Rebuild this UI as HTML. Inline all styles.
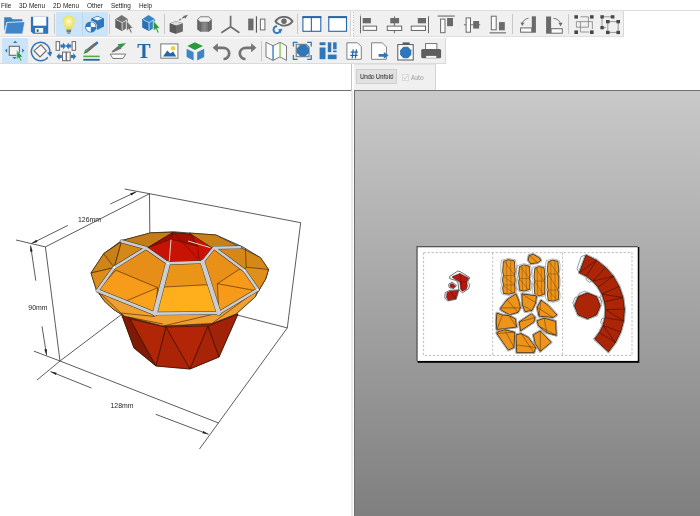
<!DOCTYPE html>
<html><head><meta charset="utf-8">
<style>
html,body{margin:0;padding:0;}
body{width:700px;height:516px;overflow:hidden;position:relative;background:#fff;font-family:"Liberation Sans",sans-serif;}
.a{position:absolute;will-change:transform;}
#menu{left:0;top:0;width:700px;height:10px;background:#fff;}
#menu span{position:absolute;top:1.5px;font-size:6.4px;line-height:8px;color:#1a1a1a;will-change:transform;}
#mline{left:0;top:10px;width:700px;height:1px;background:#dcdcdc;}
#tb1{left:0;top:11px;width:624px;height:26px;background:#f0f0f0;border-right:1px solid #d8d8d8;border-bottom:1px solid #dfdfdf;box-sizing:border-box;}
#tb2{left:0;top:38px;width:446px;height:26px;background:#f0f0f0;border-right:1px solid #d8d8d8;border-bottom:1px solid #dadada;box-sizing:border-box;}
.hl{position:absolute;background:#cce4f7;}
.sep{position:absolute;width:1px;background:#c8c8c8;}
#panel{left:354px;top:64px;width:82px;height:26px;background:#f0f0f0;border-right:1px solid #d4d4d4;border-top:1px solid #e2e2e2;box-sizing:border-box;}
#btn{left:356px;top:69px;width:41px;height:15px;background:#e1e1e1;border:1px solid #cfcfcf;box-sizing:border-box;}
#btn span{position:absolute;left:2.5px;top:2px;font-size:7px;line-height:10px;color:#111;will-change:transform;white-space:nowrap;transform:scaleX(0.85);transform-origin:0 0;}
#chk{left:402px;top:73.5px;width:7px;height:7px;border:1px solid #dadada;box-sizing:border-box;background:#f3f3f3;}
#auto{left:410.5px;top:74px;font-size:6.6px;line-height:8px;color:#9a9a9a;transform:scaleX(0.9);transform-origin:0 0;}
#hl90{left:0;top:90px;width:351px;height:1px;background:#707070;}
#vl351{left:351px;top:64px;width:1px;height:27px;background:#c4c4c4;}
#vl354{left:354px;top:64px;width:1px;height:26px;background:#dedede;}
#view2d{left:354px;top:90px;width:346px;height:426px;border-left:1px solid #6e6e6e;border-top:1px solid #6e6e6e;box-sizing:border-box;background:linear-gradient(#c9c9c9,#7f7f7f);}
</style></head><body>
<div id="menu" class="a">
<span style="left:1px">File</span>
<span style="left:19px">3D Menu</span>
<span style="left:53px">2D Menu</span>
<span style="left:87px">Other</span>
<span style="left:111px">Setting</span>
<span style="left:139px">Help</span>
</div>
<div id="mline" class="a"></div>
<div id="tb1" class="a">
<div class="hl" style="left:56px;top:1px;width:26px;height:24px"></div>
<div class="hl" style="left:82px;top:1px;width:26px;height:24px"></div>
<div style="position:absolute;left:82px;top:1px;width:1px;height:24px;background:#b9d7f0"></div>
<div class="sep" style="left:54px;top:3px;height:20px"></div>
<div class="sep" style="left:109px;top:3px;height:20px"></div>
<div class="sep" style="left:164px;top:3px;height:20px"></div>
<div class="sep" style="left:297px;top:3px;height:20px"></div>
<div class="sep" style="left:360px;top:3px;height:20px"></div>
<div style="position:absolute;left:350px;top:0;width:1px;height:26px;background:#d6d6d6"></div>
<div style="position:absolute;left:351px;top:0;width:2px;height:26px;background:#f7f7f7"></div>
<div style="position:absolute;left:353px;top:1px;width:1px;height:24px;background:repeating-linear-gradient(#c2c2c2 0 1px,transparent 1px 2.6px)"></div>
<div class="sep" style="left:512px;top:3px;height:20px"></div>
<div class="sep" style="left:568px;top:3px;height:20px"></div>
</div>
<div id="tb2" class="a">
<div class="hl" style="left:2px;top:0px;width:26px;height:25px"></div>
<div class="sep" style="left:261px;top:3px;height:20px"></div>
</div>
<!--ICONS-->
<svg class="a" style="left:0;top:0" width="700" height="66" viewBox="0 0 700 66">
<!-- folder -->
<path fill="#3a7fc2" d="M4.2,17.2 H10.8 L12.7,19.2 H22.4 V21.5 L6.5,22.2 L4.2,31.5 Z"/>
<path fill="#3e86c9" stroke="#e9f1f8" stroke-width="0.7" d="M6.9,22.4 L24.8,21.7 L22.6,33.9 L4.8,33.9 Z"/>
<!-- save -->
<path fill="#2f73b4" d="M30.9,16.8 H48.2 V33.8 H33.2 L30.9,31.4 Z"/>
<rect x="33.1" y="16.8" width="13.2" height="8.9" fill="#fafcff"/>
<rect x="35.1" y="28" width="8.1" height="4.7" fill="#f5f8fb"/>
<rect x="36.7" y="29.4" width="1.9" height="2.4" fill="#2f4f6f"/>
<!-- bulb -->
<defs>
<radialGradient id="glow" cx="0.5" cy="0.45" r="0.6"><stop offset="0" stop-color="#fffdf0"/><stop offset="0.4" stop-color="#f5ee8c"/><stop offset="1" stop-color="#e6dc50"/></radialGradient><filter id="soft" x="-20%" y="-20%" width="140%" height="140%"><feGaussianBlur stdDeviation="0.45"/></filter>
<linearGradient id="gcyl" x1="0" x2="1"><stop offset="0" stop-color="#5c5c5c"/><stop offset="0.5" stop-color="#8a8a8a"/><stop offset="1" stop-color="#5c5c5c"/></linearGradient>
</defs>
<path fill="url(#glow)" filter="url(#soft)" d="M68.8,15.6 C72.4,15.6 75,18.3 75,21.6 C75,24.1 73.4,25.6 72.3,27.5 L71.7,29 H65.9 L65.3,27.5 C64.2,25.6 62.6,24.1 62.6,21.6 C62.6,18.3 65.2,15.6 68.8,15.6 Z"/>
<rect x="66.4" y="29.6" width="4.8" height="1.1" fill="#5a5a5a"/>
<rect x="66.6" y="31.2" width="4.4" height="1.1" fill="#5a5a5a"/>
<rect x="67.4" y="32.7" width="2.8" height="0.9" fill="#6a6a6a"/>
<!-- 3d -->
<path fill="#2f77b8" d="M91.2,18.6 L97.6,15.8 L104,18.6 V26.6 L97.6,29.8 L91.2,26.6 Z"/>
<path fill="#eef4fa" d="M92.8,18.6 L97.6,16.6 L102.4,18.6 L97.6,20.6 Z"/>
<circle cx="90.8" cy="27" r="6.2" fill="#cce4f7"/>
<circle cx="90.8" cy="27" r="5.6" fill="#2f77b8"/>
<path fill="#f4f8fc" d="M90.8,27 V22.2 A4.8,4.8 0 0 1 95.6,27 Z M90.8,27 V31.8 A4.8,4.8 0 0 1 86,27 Z"/>
<!-- cube cursor gray -->
<path fill="#737373" d="M121.7,15.1 L127.9,18.9 V27.6 L122.1,30.9 L115.5,27.6 V18.9 Z"/>
<path fill="#5f5f5f" d="M115.5,18.9 L122.1,22.6 V30.9 L115.5,27.6 Z"/>
<path fill="none" stroke="#f0f0f0" stroke-width="0.8" d="M116.2,19.6 L122.1,22.6 L127.4,19.6 M122.1,22.6 V30.4"/>
<path fill="#6e6e6e" stroke="#f0f0f0" stroke-width="0.8" d="M126.4,20.6 V31.2 L128.7,29 L130.7,33.3 L132.3,32.5 L130.4,28.3 H133.4 Z"/>
<!-- cube cursor blue -->
<path fill="#3584c6" d="M148.6,15.1 L154.8,18.9 V27.6 L149,30.9 L142.4,27.6 V18.9 Z"/>
<path fill="#2a6fb0" d="M142.4,18.9 L149,22.6 V30.9 L142.4,27.6 Z"/>
<path fill="none" stroke="#d9ecf8" stroke-width="0.8" d="M143.1,19.6 L149,22.6 L154.3,19.6 M149,22.6 V30.4"/>
<path fill="#2a9a3c" stroke="#f0f0f0" stroke-width="0.8" d="M153.3,20.6 V31.2 L155.6,29 L157.6,33.3 L159.2,32.5 L157.3,28.3 H160.3 Z"/>
<!-- cube arrow -->
<path fill="#6a6a6a" d="M176,21 L182.9,23.3 V31.4 L176,33.8 L169.8,31.8 V23.3 Z"/>
<path fill="#dedede" d="M176,21.3 L182.4,23.4 L176,25.6 L170.3,23.4 Z"/>
<path fill="#5a5a5a" d="M169.8,23.5 L176,25.7 V33.8 L169.8,31.8 Z"/>
<path fill="none" stroke="#6a6a6a" stroke-width="1.2" d="M179.2,20.2 L181,19 M182.2,18.2 L184.2,16.9"/>
<path fill="#6a6a6a" d="M188,14.8 L183.2,16 L185.2,18.8 Z"/>
<!-- hex prism -->
<path fill="url(#gcyl)" d="M197.2,19.5 L200.3,16.4 H208.8 L211.8,19.5 V29.5 L208.8,31.8 H200.3 L197.2,29.5 Z"/>
<path fill="#f2f2f2" stroke="#707070" stroke-width="0.6" d="M197.6,19.5 L200.4,16.9 H208.7 L211.4,19.5 L208.7,22 H200.4 Z"/>
<path fill="none" stroke="#505050" stroke-width="0.4" d="M200.4,22 V31.6 M208.7,22 V31.6"/>
<!-- axes -->
<path fill="none" stroke="#6c6c6c" stroke-width="1.7" d="M230.6,15.7 V26.8 L221.3,32.7 M230.6,26.8 L239.4,32.7"/>
<!-- bars -->
<rect x="248.2" y="18.6" width="5.3" height="11.7" fill="#6a6a6a"/>
<rect x="255.9" y="16.3" width="1.1" height="16.4" fill="#5a5a5a"/>
<rect x="260.4" y="19.1" width="4.5" height="10.8" fill="#fafafa" stroke="#6a6a6a" stroke-width="1"/>
<!-- eye -->
<path fill="#6a6a6a" d="M274.3,21.3 C277,17 280.5,16 284,16 C287.5,16 291,17 293.6,21.3 C291,25.6 287.5,26.5 284,26.5 C280.5,26.5 277,25.6 274.3,21.3 Z"/>
<path fill="#f0f0f0" d="M276.8,21.3 C279,18.5 281.5,17.8 284,17.8 C286.5,17.8 289,18.5 291.2,21.3 C289,24 286.5,24.8 284,24.8 C281.5,24.8 279,24 276.8,21.3 Z"/>
<circle cx="284" cy="21.2" r="2.7" fill="#6a6a6a"/>
<circle cx="277" cy="29.6" r="5.2" fill="#f0f0f0"/>
<path fill="none" stroke="#2f77b8" stroke-width="1.9" d="M280.3,29.8 A3.4,3.4 0 1 1 277,26.3"/>
<path fill="#2f77b8" d="M280.5,33.5 L282.4,28.8 L278.4,29.2 Z"/>
<!-- two-pane window -->
<rect x="302.9" y="16.8" width="17.9" height="14.5" fill="#fff" stroke="#2566a6" stroke-width="1.1"/>
<rect x="302.4" y="16.3" width="18.9" height="1.8" fill="#2566a6"/>
<rect x="310.8" y="16.8" width="1.1" height="14.5" fill="#2566a6"/>
<!-- single window -->
<rect x="328.8" y="16.8" width="17.7" height="14.5" fill="#fff" stroke="#2566a6" stroke-width="1.1"/>
<rect x="328.2" y="16.3" width="18.8" height="1.8" fill="#2566a6"/>
<!-- align left -->
<rect x="360" y="16.3" width="1" height="16.6" fill="#6a6a6a"/>
<rect x="362.7" y="18" width="8.2" height="5.3" fill="#6a6a6a"/>
<rect x="363.2" y="26.1" width="13.4" height="4.3" fill="#fbfbfb" stroke="#6a6a6a" stroke-width="1"/>
<!-- align center -->
<rect x="393.9" y="16.3" width="1" height="16.9" fill="#6a6a6a"/>
<rect x="390.3" y="18" width="8.8" height="5.3" fill="#6a6a6a"/>
<rect x="387.3" y="26.1" width="14.4" height="4.4" fill="#fbfbfb" stroke="#6a6a6a" stroke-width="1"/>
<!-- align right -->
<rect x="428" y="16.3" width="1" height="16.9" fill="#6a6a6a"/>
<rect x="417.8" y="18" width="8.2" height="5.3" fill="#6a6a6a"/>
<rect x="411.3" y="26.1" width="14.2" height="4.4" fill="#fbfbfb" stroke="#6a6a6a" stroke-width="1"/>
<!-- align top -->
<rect x="437.7" y="15.5" width="17" height="1.1" fill="#6a6a6a"/>
<rect x="440.6" y="19.1" width="4.4" height="13.6" fill="#fbfbfb" stroke="#6a6a6a" stroke-width="1"/>
<rect x="447.1" y="18" width="5.9" height="8.2" fill="#6a6a6a"/>
<!-- align middle -->
<rect x="463.9" y="24.3" width="16.3" height="1" fill="#6a6a6a"/>
<rect x="466.1" y="17.9" width="4.4" height="14.3" fill="#fbfbfb" stroke="#6a6a6a" stroke-width="1"/>
<rect x="473.2" y="21" width="5.9" height="7.6" fill="#6a6a6a"/>
<!-- align bottom -->
<rect x="489.6" y="32.3" width="16.4" height="1.1" fill="#6a6a6a"/>
<rect x="491.3" y="16.2" width="4.9" height="13.6" fill="#fbfbfb" stroke="#6a6a6a" stroke-width="1"/>
<rect x="499" y="22.1" width="5.8" height="8.2" fill="#6a6a6a"/>
<!-- rotate left -->
<rect x="531.8" y="16.3" width="4.1" height="16.4" fill="#6a6a6a"/>
<rect x="520.6" y="27.9" width="11.2" height="4.3" fill="#fbfbfb" stroke="#6a6a6a" stroke-width="1"/>
<path fill="none" stroke="#6a6a6a" stroke-width="0.9" d="M528.6,18.2 C525,18.6 522.8,21 522.3,23.8"/>
<path fill="#6a6a6a" d="M520.4,22.6 L522.3,26 L524.4,22.8 Z"/>
<!-- rotate right -->
<rect x="546.1" y="16.5" width="5" height="17.2" fill="#6a6a6a"/>
<rect x="551.1" y="28.7" width="11.2" height="4.5" fill="#fbfbfb" stroke="#6a6a6a" stroke-width="1"/>
<path fill="none" stroke="#6a6a6a" stroke-width="0.9" d="M553.5,18.3 C557.5,18.6 560,21 560.6,24"/>
<path fill="#6a6a6a" d="M558.5,23 L560.6,26.2 L562.6,22.8 Z"/>
<!-- group -->
<path fill="none" stroke="#7a7a7a" stroke-width="0.75" d="M580.4,16.8 H588.4 V27.2 H576.4 V21.6 H592.4 V29 M580.4,21.6 V32 H589.2"/>
<g fill="#474747">
<rect x="574.4" y="15.2" width="3.6" height="3.4"/><rect x="590" y="15.2" width="3.6" height="3.4"/>
<rect x="574.4" y="30.4" width="3.6" height="3.6"/><rect x="590" y="30.4" width="3.6" height="3.6"/>
</g>
<!-- ungroup -->
<path fill="none" stroke="#7a7a7a" stroke-width="0.75" d="M602,16.8 H612.6 M602,16.8 V27.6 H606 M607.8,21.6 H618.2 V32.4 H607.8 Z"/>
<g fill="#474747">
<rect x="600.4" y="15.2" width="3.4" height="3.3"/><rect x="610.8" y="15.2" width="3.6" height="3.3"/>
<rect x="600.4" y="26" width="3.4" height="3.3"/>
<rect x="606" y="20" width="3.6" height="3.3"/><rect x="616.4" y="20" width="3.6" height="3.3"/>
<rect x="606" y="30.8" width="3.6" height="3.3"/><rect x="616.4" y="30.8" width="3.6" height="3.3"/>
</g>

<!-- ROW 2 -->
<!-- select -->
<rect x="9.3" y="46.3" width="10.1" height="9" fill="#f5f5f5" stroke="#6a6a6a" stroke-width="1.1"/>
<g fill="#2f77b8">
<path d="M15.2,40.8 L17.3,43 H13.1 Z"/><path d="M5,50.6 L7.2,48.4 V52.8 Z"/>
<path d="M24.3,50.6 L22.1,48.4 V52.8 Z"/><path d="M14.5,59.2 L16.6,57 H12.4 Z"/>
</g>
<path fill="#2a9a3c" stroke="#cce4f7" stroke-width="0.7" d="M16.8,50.2 V59.6 L18.8,57.7 L20.6,61.3 L22,60.6 L20.3,57.1 H23 Z"/>
<!-- rotate -->
<path fill="none" stroke="#2f77b8" stroke-width="1.5" d="M49.6,53.5 A9.2,9.2 0 1 0 47.8,57.3"/>
<path fill="#2f77b8" d="M47,52.5 L50.4,56.8 L52.3,51.8 Z"/>
<path fill="#f8f8f8" stroke="#6a6a6a" stroke-width="1.1" d="M41,44.8 L46.3,50.7 L40,57 L34,50.7 Z"/>
<!-- spread -->
<rect x="56.1" y="41.6" width="3.5" height="8.7" fill="#fafafa" stroke="#6a6a6a" stroke-width="1"/>
<rect x="72.1" y="41.6" width="3.5" height="8.7" fill="#fafafa" stroke="#6a6a6a" stroke-width="1"/>
<rect x="62.5" y="52.1" width="3.6" height="8.6" fill="#fafafa" stroke="#6a6a6a" stroke-width="1"/>
<rect x="66.6" y="52.1" width="3.6" height="8.6" fill="#fafafa" stroke="#6a6a6a" stroke-width="1"/>
<g fill="#2f77b8">
<path d="M60.5,44.4 H63 V42.4 L66,45.9 L63,49.4 V47.4 H60.5 Z"/>
<path d="M71.3,44.4 H68.8 V42.4 L65.8,45.9 L68.8,49.4 V47.4 H71.3 Z"/>
<path d="M61.8,54.9 H59.5 V52.9 L56.5,56.4 L59.5,59.9 V57.9 H61.8 Z"/>
<path d="M70.9,54.9 H73.2 V52.9 L76.2,56.4 L73.2,59.9 V57.9 H70.9 Z"/>
</g>
<!-- pen -->
<path fill="none" stroke="#6e6e6e" stroke-width="3" d="M86.8,51 L95.6,43.9"/>
<path fill="#2a9a3c" d="M83.6,53.9 L85.3,49.3 L88.2,52.2 Z"/>
<path fill="none" stroke="#2f77b8" stroke-width="2.6" stroke-linecap="round" d="M95.8,43.8 L97,42.9"/>
<rect x="83.3" y="55.6" width="16.4" height="1.6" fill="#5aa84a"/>
<rect x="83.3" y="58.9" width="16.4" height="1.8" fill="#2566a6"/>
<!-- knife -->
<path fill="#2a9a3c" d="M117.5,44.3 L126.1,42.9 L120.8,48.3 Z"/>
<path fill="#6e6e6e" d="M118.6,45.6 L121.6,48.6 L112.6,52.6 L111.6,51.6 Z"/>
<path fill="#ffffff" stroke="#777" stroke-width="1" d="M110.2,54.1 H125.8 L123,58.5 H112.9 Z"/>
<!-- T -->
<text x="143.9" y="58.2" text-anchor="middle" font-family="Liberation Serif" font-weight="bold" font-size="20" fill="#2566a6">T</text>
<!-- image -->
<rect x="160.8" y="43.9" width="17.1" height="14.3" fill="#fff" stroke="#777" stroke-width="1"/>
<circle cx="173.1" cy="48.2" r="2.3" fill="#e5d443"/>
<path fill="#2566a6" d="M163,56.4 L167.3,50.5 L170.2,53.5 L173.1,51.5 L176.2,56.4 Z"/>
<!-- colored cube -->
<path fill="#2a9a3c" d="M194.8,42.3 L203,45.9 L194.8,49.9 L187.4,45.9 Z"/>
<path fill="#3a86c6" d="M186.6,48.7 L193.6,52.2 V60.4 L186.6,56.9 Z"/>
<path fill="#3a86c6" d="M197.2,52.2 L204.2,48.7 V56.9 L197.2,60.4 Z"/>
<!-- undo -->
<path fill="none" stroke="#737373" stroke-width="2.7" d="M216.5,47.8 H223 C226.5,47.8 229.2,50.3 229.2,53.5 C229.2,56.7 226.5,59 223.5,59"/>
<path fill="#737373" d="M212.6,47.8 L217.8,43.3 V52.3 Z"/>
<!-- redo -->
<path fill="none" stroke="#737373" stroke-width="2.7" d="M252.4,47.8 H246 C242.5,47.8 239.8,50.3 239.8,53.5 C239.8,56.7 242.5,59 245.5,59"/>
<path fill="#737373" d="M256.4,47.8 L251.2,43.3 V52.3 Z"/>
<!-- map -->
<path fill="#fafafa" stroke="#6e6e6e" stroke-width="0.9" d="M266,42.3 L273,45.8 L280,42.3 L286.5,45.8 V60.4 L280,56.9 L273,60.4 L266,56.9 Z"/>
<rect x="272.4" y="45.8" width="1.3" height="14.4" fill="#2f77b8"/>
<rect x="279.4" y="42.6" width="1.3" height="14.2" fill="#7cc45a"/>
<!-- frame -->
<path fill="none" stroke="#2f77b8" stroke-width="1.3" d="M293.4,46.5 V42.3 H297.6 M307.2,42.3 H311.2 V46.5 M311.2,55 V59.3 H307.2 M297.6,59.3 H293.4 V55"/>
<path fill="#fff" stroke="#888" stroke-width="1.4" d="M296.3,44.5 H306.3 L309,47.2 V56.5 H296.3 Z"/>
<path fill="#2f77b8" d="M300.5,44.6 H305.3 L309,48.3 V52.9 L305.3,56.5 H300.5 L296.9,52.9 V48.3 Z"/>
<!-- layout -->
<g fill="#2f77b8">
<rect x="319.6" y="42.3" width="5.9" height="2.9"/>
<rect x="319.6" y="47.5" width="5.9" height="11.7"/>
<rect x="327.8" y="42.3" width="3.5" height="9.9"/>
<rect x="333.1" y="42.3" width="3.5" height="7"/>
<rect x="333.1" y="50.5" width="3.5" height="1.7"/>
<rect x="327.8" y="54.6" width="8.8" height="4.6"/>
</g>
<!-- page # -->
<path fill="#fff" stroke="#808080" stroke-width="1" d="M346.9,42.8 H357.5 L361.3,46.6 V59.3 H346.9 Z"/>
<path fill="none" stroke="#2566a6" stroke-width="1.25" d="M353.2,49.4 L352.2,58.2 M356.4,49.4 L355.4,58.2 M350.6,52.2 H358 M350.3,55.3 H357.7"/>
<!-- export -->
<path fill="#fff" stroke="#808080" stroke-width="1" d="M371.6,42.8 H382.3 L386.4,46.9 V59.3 H371.6 Z"/>
<path fill="#2f77b8" d="M378.6,53.9 H383.8 V51.9 L388.6,55.3 L383.8,58.7 V56.7 H378.6 Z"/>
<!-- paste -->
<rect x="397.8" y="44.6" width="15.4" height="15.4" fill="#fff" stroke="#555" stroke-width="1"/>
<rect x="402.6" y="42.4" width="7" height="1.9" fill="#555"/>
<path fill="#2f77b8" d="M403.4,46.8 H408 L411.3,50.2 V54.8 L408,58.2 H403.4 L400.1,54.8 V50.2 Z"/>
<!-- printer -->
<rect x="425.6" y="43.6" width="11.3" height="6" fill="#fff" stroke="#666" stroke-width="0.9"/>
<rect x="421.2" y="49" width="19.9" height="9.3" rx="1.5" fill="#5e5e5e"/>
<rect x="426.1" y="55.9" width="10.2" height="2" fill="#f4f4f4"/>
</svg>

<!--/ICONS-->
<div id="vl351" class="a"></div>
<div id="vl354" class="a"></div>
<div class="a" style="left:351px;top:91px;width:1.5px;height:425px;background:#e9e9e9"></div>
<div id="panel" class="a"></div>
<div id="btn" class="a"><span>Undo Unfold</span></div>
<div id="chk" class="a"><svg width="7" height="7" style="position:absolute;left:-1px;top:-1px"><path d="M1.5,3.6 L2.9,5.1 L5.6,1.6" fill="none" stroke="#b8b8b8" stroke-width="0.8"/></svg></div>
<div id="auto" class="a">Auto</div>
<div id="hl90" class="a"></div>
<div id="view2d" class="a"></div>
<!--2D-->
<svg class="a" style="left:0;top:0" width="700" height="516" viewBox="0 0 700 516">
<rect x="417.5" y="247" width="221.8" height="115.8" fill="#000"/>
<rect x="416.4" y="246" width="221.3" height="114.9" fill="#555"/>
<rect x="417.7" y="247.3" width="220" height="113.6" fill="#fff"/>
<g fill="none" stroke="#a8a8a8" stroke-width="0.8" stroke-dasharray="2.2,1.8"><path d="M423.6,252.6 H632 V355.4 H423.6 Z M492.7,252.6 V355.4 M562.6,252.6 V355.4"/></g>
<g stroke-linejoin="round">
<path fill="#fff" stroke="#333" stroke-width="0.7" d="M449.6,276.5 L457.8,271 L460.5,271.8 L469.8,277.6 L467.6,281.9 L469.8,284.6 L468.5,288.8 L462.5,292.8 L458.8,289.8 L457.9,282 L455.3,280.3 L449.8,278.6 Z"/>
<path fill="#b8170d" stroke="#222" stroke-width="0.5" d="M452.4,276.5 L459.8,273.4 L468.7,278 L466.7,281.9 L467.5,285.8 L466.4,289.3 L462.5,291.2 L460.5,289.3 L459.8,281.9 L456.7,280.3 L452.4,277.6 Z"/>
<path fill="#fff" stroke="#333" stroke-width="0.7" d="M448.6,284.2 L452.2,282.2 L456.5,285.6 L453.8,288.6 L449.2,287.6 Z"/>
<path fill="#b8170d" stroke="#222" stroke-width="0.5" d="M450,284.6 L452.2,283.4 L455.6,285.9 L453.6,287.9 L450.2,287 Z"/>
<path fill="#fff" stroke="#333" stroke-width="0.7" d="M445.2,292.6 L450,290.3 L459,289.8 L456.2,299.3 L447.6,301 L444.8,298 Z"/>
<path fill="#b8170d" stroke="#222" stroke-width="0.5" d="M447,292.8 L450.2,291.2 L458.4,290.4 L455.8,298.7 L448.2,300.2 L446.4,297.6 Z"/>
<path fill="none" stroke="#5a0a04" stroke-width="0.45" d="M459.8,281.9 L466.7,281.9 M459.8,273.4 L462.5,291.2 M450.2,291.2 L455.8,298.7"/>
</g>

<path d="M529.1,255.3 L533.3,254.3 L539.7,258 L540.8,260.6 L537.6,262.8 L530.7,263.8 L528,260.1 Z" fill="#fff" stroke="#8a8a8a" stroke-width="2.5" stroke-linejoin="round"/><path d="M529.1,255.3 L533.3,254.3 L539.7,258 L540.8,260.6 L537.6,262.8 L530.7,263.8 L528,260.1 Z" fill="#fff" stroke="#fff" stroke-width="1.4" stroke-linejoin="round"/><path d="M529.1,255.3 L533.3,254.3 L539.7,258 L540.8,260.6 L537.6,262.8 L530.7,263.8 L528,260.1 Z" fill="#ee9519" stroke="#151008" stroke-width="0.75" stroke-linejoin="round"/>
<path d="M502.4,260.1 L508.1,258.4 L515.3,259.8 L516.4,264.4 L516.4,270.7 L515.4,275.5 L516.4,278.4 L516.4,282.1 L515.4,285.0 L516.4,287.8 L516.4,291.4 L515.4,294.2 L509.1,295.4 L502.4,294.4 L500.8,291.4 L500.8,287.8 L501.8,285.0 L500.8,282.1 L500.8,278.4 L501.8,275.5 L500.8,270.7 L500.8,264.4 L501.8,259.6 Z" fill="#fff" stroke="#777" stroke-width="0.55" stroke-linejoin="round"/><path d="M503.4,261.4 L508.1,259.6 L514.3,260.8 L515.2,271.5 L514.4,275.5 L515.2,278.5 L515.2,281.0 L514.4,285.0 L515.2,288.0 L514.8,292.7 L509.1,294.2 L503.4,293.4 L502.6,288.0 L503.4,285.0 L502.6,281.0 L502.6,278.5 L503.4,275.5 L502.6,271.5 Z" fill="#ee9519" stroke="#151008" stroke-width="0.7" stroke-linejoin="round"/><path d="M506.6,260.1 L507.1,293.7 M510.6,260.6 L511.1,293.4 M503.4,275.5 L514.4,275.5 M503.4,285.0 L514.4,285.0 M503.9,260.6 L513.8,274.5 M503.9,276.5 L513.8,284.0 M503.9,286.0 L513.8,293.2" fill="none" stroke="#6a4010" stroke-width="0.4"/>
<path d="M518.4,265.4 L523.5,263.7 L530.2,265.1 L531.3,269.0 L531.3,274.4 L530.3,278.5 L531.3,282.2 L531.3,287.2 L530.3,291.0 L524.5,292.2 L518.4,291.2 L516.8,287.2 L516.8,282.2 L517.8,278.5 L516.8,274.4 L516.8,269.0 L517.8,264.9 Z" fill="#fff" stroke="#777" stroke-width="0.55" stroke-linejoin="round"/><path d="M519.4,266.7 L523.5,264.9 L529.2,266.1 L530.1,274.5 L529.3,278.5 L530.1,281.5 L529.7,289.5 L524.5,291.0 L519.4,290.2 L518.6,281.5 L519.4,278.5 L518.6,274.5 Z" fill="#ee9519" stroke="#151008" stroke-width="0.7" stroke-linejoin="round"/><path d="M522.0,265.4 L522.5,290.5 M526.0,265.9 L526.5,290.2 M519.4,278.5 L529.3,278.5 M519.9,265.9 L528.7,277.5 M519.9,279.5 L528.7,290.0" fill="none" stroke="#6a4010" stroke-width="0.4"/>
<path d="M533.8,267.0 L538.7,265.3 L545.1,266.7 L546.2,270.9 L546.2,276.6 L545.2,281.0 L546.2,285.4 L546.2,291.4 L545.2,295.8 L539.7,297.0 L533.8,296.0 L532.2,291.4 L532.2,285.4 L533.2,281.0 L532.2,276.6 L532.2,270.9 L533.2,266.5 Z" fill="#fff" stroke="#777" stroke-width="0.55" stroke-linejoin="round"/><path d="M534.8,268.3 L538.7,266.5 L544.1,267.7 L545.0,277.0 L544.2,281.0 L545.0,284.0 L544.6,294.3 L539.7,295.8 L534.8,295.0 L534.0,284.0 L534.8,281.0 L534.0,277.0 Z" fill="#ee9519" stroke="#151008" stroke-width="0.7" stroke-linejoin="round"/><path d="M537.2,267.0 L537.7,295.3 M541.2,267.5 L541.7,295.0 M534.8,281.0 L544.2,281.0 M535.3,267.5 L543.6,280.0 M535.3,282.0 L543.6,294.8" fill="none" stroke="#6a4010" stroke-width="0.4"/>
<path d="M547.1,260.6 L552.2,258.9 L558.9,260.3 L560.0,264.3 L560.0,269.8 L559.0,274.0 L560.0,278.8 L560.0,285.2 L559.0,290.0 L560.0,293.3 L560.0,297.8 L559.0,301.1 L553.2,302.3 L547.1,301.3 L545.5,297.8 L545.5,293.3 L546.5,290.0 L545.5,285.2 L545.5,278.8 L546.5,274.0 L545.5,269.8 L545.5,264.3 L546.5,260.1 Z" fill="#fff" stroke="#777" stroke-width="0.55" stroke-linejoin="round"/><path d="M548.1,261.9 L552.2,260.1 L557.9,261.3 L558.8,270.0 L558.0,274.0 L558.8,277.0 L558.8,286.0 L558.0,290.0 L558.8,293.0 L558.4,299.6 L553.2,301.1 L548.1,300.3 L547.3,293.0 L548.1,290.0 L547.3,286.0 L547.3,277.0 L548.1,274.0 L547.3,270.0 Z" fill="#ee9519" stroke="#151008" stroke-width="0.7" stroke-linejoin="round"/><path d="M550.8,260.6 L551.2,300.6 M554.8,261.1 L555.2,300.3 M548.1,274.0 L558.0,274.0 M548.1,290.0 L558.0,290.0 M548.6,261.1 L557.4,273.0 M548.6,275.0 L557.4,289.0 M548.6,291.0 L557.4,300.1" fill="none" stroke="#6a4010" stroke-width="0.4"/>
<path d="M500.7,307.9 L507.1,299.6 L516,293.8 L518.6,300.2 L520.5,307.9 L517.9,312.4 L509.6,314.9 L500.7,309.8 Z" fill="#fff" stroke="#8a8a8a" stroke-width="2.5" stroke-linejoin="round"/><path d="M500.7,307.9 L507.1,299.6 L516,293.8 L518.6,300.2 L520.5,307.9 L517.9,312.4 L509.6,314.9 L500.7,309.8 Z" fill="#fff" stroke="#fff" stroke-width="1.4" stroke-linejoin="round"/><path d="M500.7,307.9 L507.1,299.6 L516,293.8 L518.6,300.2 L520.5,307.9 L517.9,312.4 L509.6,314.9 L500.7,309.8 Z" fill="#ee9519" stroke="#151008" stroke-width="0.75" stroke-linejoin="round"/>
<path d="M521.8,293.8 L536.5,295.8 L535.8,302.8 L532,310.5 L525,311.7 L522.4,305.3 Z" fill="#fff" stroke="#8a8a8a" stroke-width="2.5" stroke-linejoin="round"/><path d="M521.8,293.8 L536.5,295.8 L535.8,302.8 L532,310.5 L525,311.7 L522.4,305.3 Z" fill="#fff" stroke="#fff" stroke-width="1.4" stroke-linejoin="round"/><path d="M521.8,293.8 L536.5,295.8 L535.8,302.8 L532,310.5 L525,311.7 L522.4,305.3 Z" fill="#ee9519" stroke="#151008" stroke-width="0.75" stroke-linejoin="round"/>
<path d="M541,300.2 L548,305.3 L556.9,314.9 L553.1,317.5 L539,316.2 L537.1,307.3 Z" fill="#fff" stroke="#8a8a8a" stroke-width="2.5" stroke-linejoin="round"/><path d="M541,300.2 L548,305.3 L556.9,314.9 L553.1,317.5 L539,316.2 L537.1,307.3 Z" fill="#fff" stroke="#fff" stroke-width="1.4" stroke-linejoin="round"/><path d="M541,300.2 L548,305.3 L556.9,314.9 L553.1,317.5 L539,316.2 L537.1,307.3 Z" fill="#ee9519" stroke="#151008" stroke-width="0.75" stroke-linejoin="round"/>
<path d="M496.8,313 L502.6,314.9 L509,315.6 L515.4,318.8 L516.7,327.1 L496.8,329.6 L496.2,322 Z" fill="#fff" stroke="#8a8a8a" stroke-width="2.5" stroke-linejoin="round"/><path d="M496.8,313 L502.6,314.9 L509,315.6 L515.4,318.8 L516.7,327.1 L496.8,329.6 L496.2,322 Z" fill="#fff" stroke="#fff" stroke-width="1.4" stroke-linejoin="round"/><path d="M496.8,313 L502.6,314.9 L509,315.6 L515.4,318.8 L516.7,327.1 L496.8,329.6 L496.2,322 Z" fill="#ee9519" stroke="#151008" stroke-width="0.75" stroke-linejoin="round"/>
<path d="M519.2,322 L531.4,313.7 L535.2,317.5 L533.9,322 L520.5,330.9 Z" fill="#fff" stroke="#8a8a8a" stroke-width="2.5" stroke-linejoin="round"/><path d="M519.2,322 L531.4,313.7 L535.2,317.5 L533.9,322 L520.5,330.9 Z" fill="#fff" stroke="#fff" stroke-width="1.4" stroke-linejoin="round"/><path d="M519.2,322 L531.4,313.7 L535.2,317.5 L533.9,322 L520.5,330.9 Z" fill="#ee9519" stroke="#151008" stroke-width="0.75" stroke-linejoin="round"/>
<path d="M537.1,320.7 L544.2,318.1 L555.7,321.3 L556.3,335.4 L546.7,332.8 L538.4,325.8 Z" fill="#fff" stroke="#8a8a8a" stroke-width="2.5" stroke-linejoin="round"/><path d="M537.1,320.7 L544.2,318.1 L555.7,321.3 L556.3,335.4 L546.7,332.8 L538.4,325.8 Z" fill="#fff" stroke="#fff" stroke-width="1.4" stroke-linejoin="round"/><path d="M537.1,320.7 L544.2,318.1 L555.7,321.3 L556.3,335.4 L546.7,332.8 L538.4,325.8 Z" fill="#ee9519" stroke="#151008" stroke-width="0.75" stroke-linejoin="round"/>
<path d="M496.8,332.2 L504.5,329.6 L514.7,332.2 L514.1,347.5 L508.3,350.1 L496.8,333.5 Z" fill="#fff" stroke="#8a8a8a" stroke-width="2.5" stroke-linejoin="round"/><path d="M496.8,332.2 L504.5,329.6 L514.7,332.2 L514.1,347.5 L508.3,350.1 L496.8,333.5 Z" fill="#fff" stroke="#fff" stroke-width="1.4" stroke-linejoin="round"/><path d="M496.8,332.2 L504.5,329.6 L514.7,332.2 L514.1,347.5 L508.3,350.1 L496.8,333.5 Z" fill="#ee9519" stroke="#151008" stroke-width="0.75" stroke-linejoin="round"/>
<path d="M516,334.8 L521.1,333.5 L528.2,337.3 L535.8,347.5 L533.9,352.7 L516.7,352.7 Z" fill="#fff" stroke="#8a8a8a" stroke-width="2.5" stroke-linejoin="round"/><path d="M516,334.8 L521.1,333.5 L528.2,337.3 L535.8,347.5 L533.9,352.7 L516.7,352.7 Z" fill="#fff" stroke="#fff" stroke-width="1.4" stroke-linejoin="round"/><path d="M516,334.8 L521.1,333.5 L528.2,337.3 L535.8,347.5 L533.9,352.7 L516.7,352.7 Z" fill="#ee9519" stroke="#151008" stroke-width="0.75" stroke-linejoin="round"/>
<path d="M533.3,334.8 L540.3,330.9 L551.2,342.4 L540.3,351.4 L535.2,343.7 Z" fill="#fff" stroke="#8a8a8a" stroke-width="2.5" stroke-linejoin="round"/><path d="M533.3,334.8 L540.3,330.9 L551.2,342.4 L540.3,351.4 L535.2,343.7 Z" fill="#fff" stroke="#fff" stroke-width="1.4" stroke-linejoin="round"/><path d="M533.3,334.8 L540.3,330.9 L551.2,342.4 L540.3,351.4 L535.2,343.7 Z" fill="#ee9519" stroke="#151008" stroke-width="0.75" stroke-linejoin="round"/>
<path d="M507.1,299.6 L517.9,312.4 M500.7,307.9 L520.5,307.9 M521.8,293.8 L535.8,302.8 M522.4,305.3 L532,310.5 M541,300.2 L539,316.2 M537.1,307.3 L553.1,317.5 M502.6,314.9 L496.8,329.6 M509,315.6 L516.7,327.1 M519.2,322 L535.2,317.5 M544.2,318.1 L546.7,332.8 M538.4,325.8 L556.3,335.4 M504.5,329.6 L514.1,347.5 M496.8,333.5 L514.7,332.2 M521.1,333.5 L533.9,352.7 M516.7,345 L535.8,347.5 M540.3,330.9 L540.3,351.4 M529.1,255.3 L537.6,262.8" fill="none" stroke="#3a2408" stroke-width="0.45"/>
<path d="M586.0,255.0 L581.2,256.5 L577.0,268.8 L579.2,272.7 Z" fill="#fff" stroke="#555" stroke-width="0.6" stroke-linejoin="round"/><path d="M586.3,276.3 L592.7,281.2 L589.4,282.3 L586.1,279.8 Z" fill="#fff" stroke="#555" stroke-width="0.6" stroke-linejoin="round"/><path d="M601.9,294.2 L604.4,301.8 L601.1,300.8 L599.8,296.9 Z" fill="#fff" stroke="#555" stroke-width="0.6" stroke-linejoin="round"/><path d="M604.9,317.7 L602.9,325.4 L600.6,322.8 L601.7,318.8 Z" fill="#fff" stroke="#555" stroke-width="0.6" stroke-linejoin="round"/><path d="M574.4,305.8 L578.2,296.6 L575.0,297.5 L572.8,303.0 Z" fill="#fff" stroke="#555" stroke-width="0.6" stroke-linejoin="round"/><path d="M578.2,296.6 L587.4,292.8 L584.6,291.2 L579.1,293.4 Z" fill="#fff" stroke="#555" stroke-width="0.6" stroke-linejoin="round"/><path d="M596.6,296.6 L600.4,305.8 L602.0,303.0 L599.8,297.5 Z" fill="#fff" stroke="#555" stroke-width="0.6" stroke-linejoin="round"/>
<path d="M586.0,255.0 L596.5,260.2 L605.7,267.4 L613.4,276.2 L619.2,286.4 L623.0,297.5 L624.5,309.1 L623.7,320.8 L620.7,332.1 L615.5,342.6 L608.4,351.9 L594.5,339.0 L599.3,332.6 L602.9,325.4 L604.9,317.7 L605.5,309.7 L604.4,301.8 L601.9,294.2 L597.9,287.2 L592.7,281.2 L586.3,276.3 L579.2,272.7 Z" fill="#fff" stroke="#8a8a8a" stroke-width="2.5" stroke-linejoin="round"/><path d="M586.0,255.0 L596.5,260.2 L605.7,267.4 L613.4,276.2 L619.2,286.4 L623.0,297.5 L624.5,309.1 L623.7,320.8 L620.7,332.1 L615.5,342.6 L608.4,351.9 L594.5,339.0 L599.3,332.6 L602.9,325.4 L604.9,317.7 L605.5,309.7 L604.4,301.8 L601.9,294.2 L597.9,287.2 L592.7,281.2 L586.3,276.3 L579.2,272.7 Z" fill="#fff" stroke="#fff" stroke-width="1.4" stroke-linejoin="round"/><path d="M586.0,255.0 L596.5,260.2 L605.7,267.4 L613.4,276.2 L619.2,286.4 L623.0,297.5 L624.5,309.1 L623.7,320.8 L620.7,332.1 L615.5,342.6 L608.4,351.9 L594.5,339.0 L599.3,332.6 L602.9,325.4 L604.9,317.7 L605.5,309.7 L604.4,301.8 L601.9,294.2 L597.9,287.2 L592.7,281.2 L586.3,276.3 L579.2,272.7 Z" fill="#ac2507" stroke="#151008" stroke-width="0.75" stroke-linejoin="round"/>
<path d="M586.3,276.3 L596.5,260.2 M592.7,281.2 L605.7,267.4 M597.9,287.2 L613.4,276.2 M601.9,294.2 L619.2,286.4 M604.4,301.8 L623.0,297.5 M605.5,309.7 L624.5,309.1 M604.9,317.7 L623.7,320.8 M602.9,325.4 L620.7,332.1 M599.3,332.6 L615.5,342.6 M579.2,272.7 L596.5,260.2 M592.7,281.2 L613.4,276.2 M601.9,294.2 L623.0,297.5 M605.5,309.7 L623.7,320.8 M602.9,325.4 L615.5,342.6" fill="none" stroke="#3a0a00" stroke-width="0.55"/>
<path d="M600.4,305.8 L596.6,315.0 L587.4,318.8 L578.2,315.0 L574.4,305.8 L578.2,296.6 L587.4,292.8 L596.6,296.6 Z" fill="#fff" stroke="#8a8a8a" stroke-width="2.5" stroke-linejoin="round"/><path d="M600.4,305.8 L596.6,315.0 L587.4,318.8 L578.2,315.0 L574.4,305.8 L578.2,296.6 L587.4,292.8 L596.6,296.6 Z" fill="#fff" stroke="#fff" stroke-width="1.4" stroke-linejoin="round"/><path d="M600.4,305.8 L596.6,315.0 L587.4,318.8 L578.2,315.0 L574.4,305.8 L578.2,296.6 L587.4,292.8 L596.6,296.6 Z" fill="#ac2507" stroke="#151008" stroke-width="0.75" stroke-linejoin="round"/>
</svg>
<!--/2D-->
<!--3D-->
<svg class="a" style="left:0;top:0" width="700" height="516" viewBox="0 0 700 516">
<g stroke="#4a4a4a" stroke-width="0.9" fill="none">
<!-- box -->
<path d="M16,240 L45.4,246.9 L149.5,193.7 L300.7,222.7 L287.3,327.9 L199.5,449"/>
<path d="M124.6,189 L149.5,193.7 L150.3,292.7"/>
<path d="M45.4,246.9 L60,361 L218.6,423"/>
<path d="M34,351.2 L60,361"/>
<path d="M37,380 L60,361 L150.3,292.7 L287.3,327.9"/>
<!-- dim lines -->
<path d="M31.4,243.6 L67.9,225.4 M110.3,204 L136.4,191.8"/>
<path d="M30.6,245.5 L35.8,280.7 M42,326.3 L46.6,355.3"/>
<path d="M50.5,371.6 L91.4,388 M155.7,414.3 L208.6,434.3"/>
</g>
<g fill="#222">
<path d="M31.4,243.6 L37.5,242.0 L36.4,239.7 Z"/>
<path d="M136.4,191.8 L130.2,193.2 L131.3,195.6 Z"/>
<path d="M30.5,245.4 L30.1,251.7 L32.7,251.3 Z"/>
<path d="M46.6,355.3 L46.9,349.0 L44.3,349.4 Z"/>
<path d="M50.5,371.6 L55.8,375.1 L56.7,372.7 Z"/>
<path d="M208.6,434.3 L203.3,430.9 L202.3,433.3 Z"/>
</g>
<g font-family="Liberation Sans" font-size="6.9" fill="#1e1e1e">
<text x="78" y="221.5">126mm</text>
<text x="28.3" y="310.3">90mm</text>
<text x="110.5" y="407.5">128mm</text>
</g>
</svg>

<!--/3D-->
<!--MODEL-->
<svg class="a" style="left:0;top:0" width="700" height="516" viewBox="0 0 700 516">
<g stroke="#2a1000" stroke-width="0.6" stroke-linejoin="round">
<!-- cup -->
<path fill="#ab2608" d="M121,313 L134,348 L156,366 L190,369 L219,357 L238,314 Z"/>
<path fill="#801a04" d="M121,313 L130,319 L156,366 L134,348 Z"/>
<path fill="#b22608" d="M130,319 L166,327 L156,366 Z"/>
<path fill="#ac2408" d="M166,327 L190,369 L156,366 Z"/>
<path fill="#b42508" d="M166,327 L208,326 L190,369 Z"/>
<path fill="#a82308" d="M208,326 L219,357 L190,369 Z"/>
<path fill="#a02208" d="M208,326 L238,314 L219,357 Z"/>
</g>
<g stroke="#2a1400" stroke-width="0.55" stroke-linejoin="round">
<!-- dome base (stripe colour) -->
<path fill="#b4b4b4" stroke="#222" stroke-width="0.8" d="M91,273 L103.7,253.7 L121.5,240.6 L150.8,232.8 L174,231.8 L189,233 L216,235 L243,247 L260.5,257.7 L268.5,269.5 L265.6,279 L258.5,291 L255.3,296.8 L236,314 L212,323.5 L163,326 L124,316 L113,309 L104,300.5 L96.4,290 Z"/>
<!-- back panels -->
<path fill="#c47c18" d="M121.5,240.6 L150.8,232.8 L173,232.3 L148,247.6 L121.5,241.5 Z"/>
<path fill="#c98018" d="M189,233 L216,235 L240,247.2 L212,248 Z"/>
<!-- red -->
<path fill="#c81304" d="M148,247.6 L173,232.6 L191,234.2 L212,248 L202.5,262 L168,263.3 Z"/>
<path fill="#9e0d02" d="M148,247.6 L173,232.6 L171,239.2 Z"/>
<path fill="#a60e02" d="M173,232.6 L191,234.2 L197.5,246 L171,239.2 Z"/>
<path fill="none" stroke="#5a0800" d="M174.3,233 L197.5,258.5 M197.5,246 L199,259"/>
<path fill="none" stroke="#e8e8e8" stroke-width="0.9" d="M171,239.5 L169.3,261 M188,241 L210.5,247.7"/>
<!-- left panels -->
<path fill="#d08518" d="M91,273 L103.7,253.7 L121.5,241.5 L114.2,267.6 Z"/>
<path fill="#c88018" d="M103.7,253.7 L121.5,241.5 L114.2,267.6 Z"/>
<path fill="#d38818" d="M121.5,241.5 L146,248 L114.2,267.6 Z"/>
<path fill="#dc8c1a" d="M91,273 L114.2,267.6 L97.6,290.6 L96.4,290 Z"/>
<!-- big left panel -->
<path fill="#e68e18" d="M146,247.8 L168,263.3 L154.8,313.6 L97.6,290.6 L114.2,267.6 Z"/>
<path fill="#f69c1a" d="M115.8,270.2 L157.7,287.7 L154.8,313.6 L97.6,290.6 Z"/>
<path fill="#f9a21a" d="M157.7,287.7 L154.8,313.6 L126,301 Z"/>
<!-- front panel -->
<path fill="#ea9418" d="M168,263.3 L202.5,262 L218.8,313 L154.8,313.6 Z"/>
<path fill="#ffae1c" d="M163.1,287.1 L208,284.7 L218.8,313 L154.8,313.6 Z"/>
<!-- right panel -->
<path fill="#e89018" d="M202.5,262 L214,247.8 L244.5,270.5 L257.7,289.6 L218.8,313 Z"/>
<path fill="#f79a1a" d="M217.4,283.7 L241.2,268 L244.5,270.5 L257.7,289.6 L218.8,313 Z"/>
<path fill="none" d="M217.4,283.7 L257.7,291"/>
<!-- right back panel -->
<path fill="#d58818" d="M214,247.8 L240,247.2 L260.5,257.7 L268.5,269.5 L265.6,279 L258.5,291 L244.5,270.5 Z"/>
<path fill="#df901c" d="M246.2,267.2 L268.5,269.5 L265.6,279 L258.5,291 L244.5,270.5 Z"/>
<path fill="none" d="M245.4,249 L246.2,267.2"/>
<!-- bottom band -->
<path fill="#f0a030" d="M97.6,290.6 L154.8,313.6 L218.8,313 L257.7,289.6 L255.3,296.8 L236,314 L212,323.5 L163,326 L124,316 L113,309 L104,300.5 Z"/>
<path fill="#e2962a" d="M97.6,290.6 L124,316 L113,309 L104,300.5 Z"/>
<path fill="none" d="M121,313 L154.8,316.5 M128,317 L163,324 M163,326 L218.8,313 M212,323.5 L257.7,289.6"/>
</g>
<!-- stripes -->
<g fill="none" stroke-linecap="round" stroke-linejoin="round">
<path stroke="#3a3a3a" stroke-width="3.5" d="M121.5,241.2 L146,248 L168,263.3"/>
<path stroke="#3a3a3a" stroke-width="3.3" d="M168,263.3 L202.5,262 L214,247.8 L240,247.2"/>
<path stroke="#3a3a3a" stroke-width="3.5" d="M146,248 L114.2,267.6 L97.6,290.6"/>
<path stroke="#3a3a3a" stroke-width="3.9" d="M97.6,290.6 L154.8,313.6"/>
<path stroke="#3a3a3a" stroke-width="3.5" d="M154.8,313.6 L218.8,313"/>
<path stroke="#3a3a3a" stroke-width="3.5" d="M218.8,313 L257.7,289.6 L244.5,270.5 L214,247.8"/>
<path stroke="#3a3a3a" stroke-width="5.3" d="M168,263.3 L154.8,313.6"/>
<path stroke="#3a3a3a" stroke-width="5.1" d="M202.5,262 L218.8,313"/>
<path stroke="#cdcdcd" stroke-width="2.6" d="M121.5,241.2 L146,248 L168,263.3"/>
<path stroke="#cdcdcd" stroke-width="2.4" d="M168,263.3 L202.5,262 L214,247.8 L240,247.2"/>
<path stroke="#cdcdcd" stroke-width="2.6" d="M146,248 L114.2,267.6 L97.6,290.6"/>
<path stroke="#cdcdcd" stroke-width="3.0" d="M97.6,290.6 L154.8,313.6"/>
<path stroke="#cdcdcd" stroke-width="2.6" d="M154.8,313.6 L218.8,313"/>
<path stroke="#cdcdcd" stroke-width="2.6" d="M218.8,313 L257.7,289.6 L244.5,270.5 L214,247.8"/>
<path stroke="#cdcdcd" stroke-width="4.4" d="M168,263.3 L154.8,313.6"/>
<path stroke="#cdcdcd" stroke-width="4.2" d="M202.5,262 L218.8,313"/>
<g fill="#fafafa" stroke="none"><circle cx="114.2" cy="267.6" r="1"/><circle cx="168" cy="263.3" r="0.9"/><circle cx="244.5" cy="270.5" r="0.9"/><circle cx="257.7" cy="289.6" r="0.9"/></g>
</g>
</svg>

<!--/MODEL-->
</body></html>
